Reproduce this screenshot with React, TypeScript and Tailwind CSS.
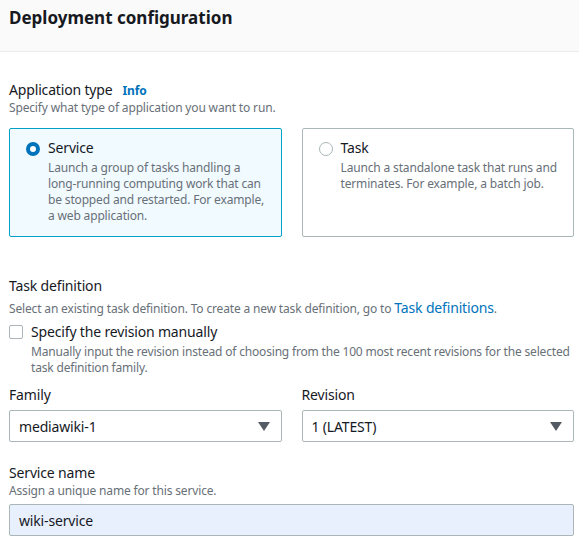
import React from "react";

const font = "font-['Noto_Sans','Open_Sans',Arial,sans-serif] tracking-[-0.01em]";

function RadioCard({
  selected,
  title,
  description,
}: {
  selected: boolean;
  title: string;
  description: string;
}) {
  return (
    <div
      className={`rounded-[2px] border pl-4 pr-3 pt-[9px] pb-3 ${
        selected
          ? "border-[#00a1c9] bg-[#f1faff]"
          : "border-[#aab7b8] bg-white"
      }`}
    >
      <div className="flex gap-2">
        <span
          className={`mt-[4px] h-[14px] w-[14px] shrink-0 rounded-full ${
            selected
              ? "border-[4px] border-[#0073bb] bg-white"
              : "border border-[#aab7b8] bg-white"
          }`}
        />
        <div>
          <div className="text-[14px] leading-5 text-[#16191f]">{title}</div>
          <p className="mt-[2px] text-[12px] leading-4 text-[#687078]">
            {description}
          </p>
        </div>
      </div>
    </div>
  );
}

function Select({ value }: { value: string }) {
  return (
    <div className="flex h-[32px] items-center justify-between rounded-[2px] border border-[#aab7b8] bg-white pl-[9px] pr-[10px]">
      <span className="text-[14px] text-[#16191f]">{value}</span>
      <svg width="12" height="9" viewBox="0 0 12 9" className="mr-[1px]">
        <path d="M0 0h12L6 9z" fill="#545b64" />
      </svg>
    </div>
  );
}

export default function App() {
  return (
    <div className={`${font} h-[539px] w-[579px] overflow-hidden bg-white`}>
      <div className="h-[52px] border-b border-[#eaeded] bg-[#fafafa] px-[9px] pt-[6px]">
        <h2 className="text-[17px] font-bold leading-6 tracking-normal text-[#16191f]">
          Deployment configuration
        </h2>
      </div>

      <div className="w-[574px] pl-[9px] pt-[28px]">
        <div className="flex items-baseline gap-[10px]">
          <span className="text-[14px] leading-5 text-[#16191f]">
            Application type
          </span>
          <span className="text-[12px] font-bold text-[#0073bb]">Info</span>
        </div>
        <p className="text-[12px] leading-4 text-[#687078]">
          Specify what type of application you want to run.
        </p>

        <div className="mt-[12px] grid h-[108px] grid-cols-2 gap-5">
          <RadioCard
            selected
            title="Service"
            description="Launch a group of tasks handling a long‑running computing work that can be stopped and restarted. For example, a web application."
          />
          <RadioCard
            selected={false}
            title="Task"
            description="Launch a standalone task that runs and terminates. For example, a batch job."
          />
        </div>

        <div className="mt-[40px] text-[14px] leading-5 text-[#16191f]">
          Task definition
        </div>
        <p className="mt-[2px] text-[12px] leading-5 text-[#687078]">
          Select an existing task definition. To create a new task definition,
          go to{" "}
          <a className="text-[14px] text-[#0073bb]">Task definitions</a>.
        </p>

        <div className="mt-[3px] flex gap-2">
          <span className="mt-[3px] h-[14px] w-[14px] shrink-0 rounded-[2px] border border-[#aab7b8] bg-white" />
          <div>
            <div className="text-[14px] leading-5 text-[#16191f]">
              Specify the revision manually
            </div>
            <p className="mt-[2px] text-[12px] leading-4 tracking-[-0.015em] text-[#687078]">
              Manually input the revision instead of choosing from the 100 most
              recent revisions for the selected task definition family.
            </p>
          </div>
        </div>

        <div className="mt-[9px] grid grid-cols-2 gap-5">
          <div>
            <div className="mb-[5px] text-[14px] leading-5 text-[#16191f]">
              Family
            </div>
            <Select value="mediawiki-1" />
          </div>
          <div>
            <div className="mb-[5px] text-[14px] leading-5 text-[#16191f]">
              Revision
            </div>
            <Select value="1 (LATEST)" />
          </div>
        </div>

        <div className="mt-[21px] text-[14px] leading-5 text-[#16191f]">
          Service name
        </div>
        <p className="text-[12px] leading-4 text-[#687078]">
          Assign a unique name for this service.
        </p>
        <div className="mt-[5px] flex h-[32px] items-center rounded-[2px] border border-[#aab7b8] bg-[#e8f0fe] pl-[9px] text-[14px] text-[#16191f]">
          wiki-service
        </div>
      </div>
    </div>
  );
}
